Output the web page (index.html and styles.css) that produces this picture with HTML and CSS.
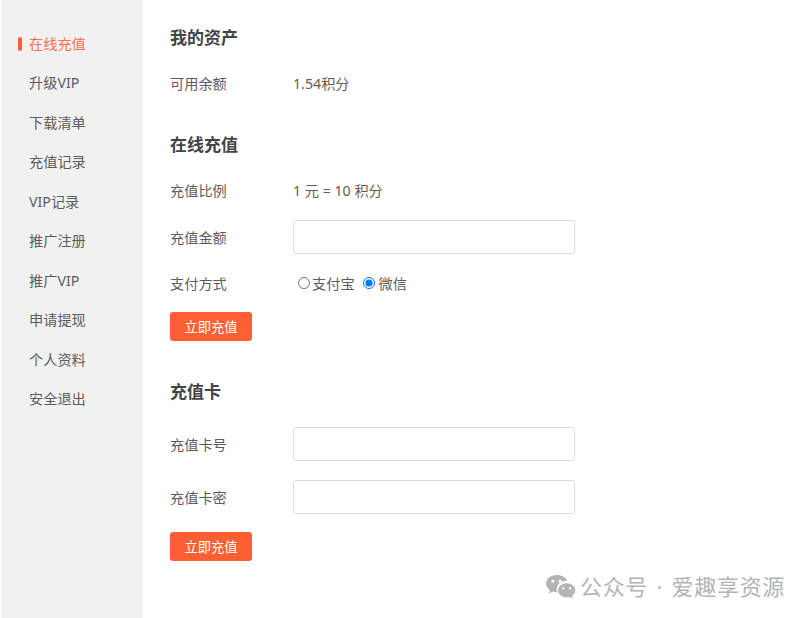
FILE: index.html
```html
<!DOCTYPE html>
<html lang="zh-CN">
<head>
<meta charset="utf-8">
<title>在线充值</title>
<link rel="stylesheet" href="styles.css">
</head>
<body>
<div class="page">
  <nav class="side">
    <a class="item active">在线充值</a>
    <a class="item">升级VIP</a>
    <a class="item">下载清单</a>
    <a class="item">充值记录</a>
    <a class="item">VIP记录</a>
    <a class="item">推广注册</a>
    <a class="item">推广VIP</a>
    <a class="item">申请提现</a>
    <a class="item">个人资料</a>
    <a class="item">安全退出</a>
  </nav>
  <main class="main">
    <h2 class="title first">我的资产</h2>
    <div class="row r-balance"><span class="label">可用余额</span><span class="value">1.54积分</span></div>

    <h2 class="title t-online">在线充值</h2>
    <div class="row r-ratio"><span class="label">充值比例</span><span class="value">1 元 = 10 积分</span></div>
    <div class="row r-amount"><span class="label">充值金额</span><input class="input" type="text"></div>
    <div class="row r-pay"><span class="label">支付方式</span>
      <div class="radios">
        <label class="radio"><input type="radio" name="pay">支付宝</label>
        <label class="radio wide"><input type="radio" name="pay" checked>微信</label>
      </div>
    </div>
    <button class="btn b-online" type="button">立即充值</button>

    <h2 class="title t-card">充值卡</h2>
    <div class="row r-card"><span class="label">充值卡号</span><input class="input" type="text"></div>
    <div class="row r-secret"><span class="label">充值卡密</span><input class="input" type="text"></div>
    <button class="btn b-card" type="button">立即充值</button>
  </main>
</div>
<div class="mark">
  <svg class="mark-icon" viewBox="0 0 32 26" width="31" height="25" aria-hidden="true">
    <path fill="#b4b4b4" d="M12 1C5.900 1 1 5 1 10c0 2.800 1.600 5.300 4 7l-1 3.500 4-2.200c1.200.4 2.500.6 4 .6h.6c-.4-1-.6-2-.6-3 0-5 4.600-8.900 10.300-8.900h.6C22 3.700 17.500 1 12 1z"/>
    <path fill="#b4b4b4" d="M22.500 9.500c-5 0-9 3.300-9 7.400s4 7.400 9 7.400c1.100 0 2.200-.2 3.200-.5l3.300 1.700-.9-2.900c2-1.300 3.400-3.400 3.400-5.700 0-4.100-4-7.400-9-7.400z"/>
    <circle fill="#fff" cx="8" cy="7.500" r="1.500"/><circle fill="#fff" cx="15.500" cy="7.500" r="1.500"/>
    <circle fill="#fff" cx="19" cy="15" r="1.200"/><circle fill="#fff" cx="26" cy="15" r="1.200"/>
  </svg>
  <span class="mark-text">公众号 · 爱趣享资源</span>
</div>
</body>
</html>
```
FILE: styles.css
```css
* { box-sizing: border-box; }
html, body { margin: 0; padding: 0; }
body {
  width: 811px;
  height: 618px;
  overflow: hidden;
  position: relative;
  background: #fff;
  color: #5c5c5c;
  font-family: "Noto Sans", "Noto Sans CJK SC", "Liberation Sans", sans-serif;
  font-size: 14.2px;
}
.page { display: flex; height: 618px; padding-left: 1px; }
.side {
  width: 142px;
  flex: none;
  background: #f1f1f1;
  padding-top: 23.5px;
  display: flex;
  flex-direction: column;
}
.item {
  display: block;
  height: 39.5px;
  line-height: 39.5px;
  padding-left: 28px;
  color: #5c5c5c;
  position: relative;
}
.item.active { color: #ff6f4d; }
.item.active::before {
  content: "";
  position: absolute;
  left: 17px;
  top: 13px;
  width: 4px;
  height: 14px;
  border-radius: 2px;
  background: #ff5f33;
}
.main { flex: 1; padding-left: 27px; }
.title {
  margin: 0;
  font-size: 17px;
  font-weight: 700;
  line-height: 24px;
  color: #444;
}
.title.first { margin-top: 26px; }
.t-online { margin-top: 38px; }
.t-card { margin-top: 39px; }
.row { display: flex; align-items: center; }
.label { width: 123px; flex: none; }
.value { color: #6b5a50; }
.r-balance { height: 24px; margin-top: 21px; }
.r-ratio { height: 24px; margin-top: 21px; }
.r-amount { height: 34px; margin-top: 18px; }
.r-pay { height: 24px; margin-top: 17px; }
.r-card { height: 34px; margin-top: 23px; }
.r-secret { height: 34px; margin-top: 19px; }
.input {
  width: 282px;
  height: 34px;
  border: 1px solid #ddd;
  border-radius: 3px;
  background: #fff;
  padding: 0 8px;
  outline: none;
}
.radios { display: flex; gap: 8px; padding-left: 5px; }
.radio { display: flex; align-items: center; }
.radio input { margin: 0 2px 0 0; width: 12px; height: 12px; }
.radio.wide input { margin-right: 4px; }
.btn {
  display: block;
  width: 82px;
  height: 29px;
  border: none;
  border-radius: 3px;
  background: #ff5f33;
  color: #fff;
  font: inherit;
  font-size: 13.3px;
  padding: 0;
}
.b-online { margin-top: 17px; }
.b-card { margin-top: 18px; }
.mark {
  position: absolute;
  left: 545px;
  top: 572px;
  display: flex;
  align-items: center;
  gap: 4px;
  color: #b4b4b4;
  font-size: 22px;
  line-height: 26px;
  white-space: nowrap;
}
.mark-text { letter-spacing: 0.7px; word-spacing: 2px; }
.mark-icon { flex: none; margin-top: 2px; }
```
